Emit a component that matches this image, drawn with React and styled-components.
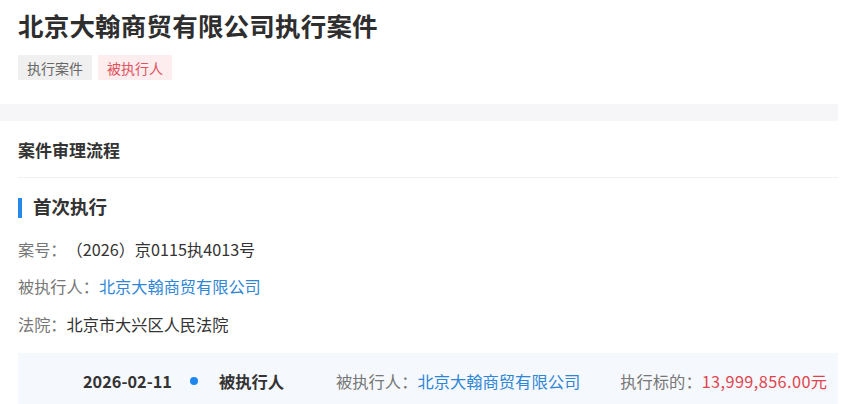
import React from "react";
import styled, { createGlobalStyle } from "styled-components";

const GlobalStyle = createGlobalStyle`
  * { box-sizing: border-box; }
  body {
    margin: 0;
    background: #ffffff;
    font-family: "Noto Sans CJK SC", "Noto Sans", sans-serif;
    color: #333;
  }
`;

const caseInfo = {
  title: "北京大翰商贸有限公司执行案件",
  number: "（2026）京0115执4013号",
  party: "北京大翰商贸有限公司",
  court: "北京市大兴区人民法院",
  date: "2026-02-11",
  role: "被执行人",
  amount: "13,999,856.00元",
};

export default function App() {
  return (
    <>
      <GlobalStyle />
      <Page>
        <Header>
          <Title>{caseInfo.title}</Title>
          <Tags>
            <Tag>执行案件</Tag>
            <Tag tone="red">被执行人</Tag>
          </Tags>
        </Header>
        <Band />
        <Section>
          <SectionTitle>案件审理流程</SectionTitle>
          <StageTitle>首次执行</StageTitle>
          <InfoRow>
            <Label>案号：</Label>
            {caseInfo.number}
          </InfoRow>
          <InfoRow>
            <Label>被执行人：</Label>
            <Link>{caseInfo.party}</Link>
          </InfoRow>
          <InfoRow>
            <Label>法院：</Label>
            {caseInfo.court}
          </InfoRow>
          <Timeline>
            <DateText>{caseInfo.date}</DateText>
            <Dot />
            <Role>{caseInfo.role}</Role>
            <Field>
              <Label>被执行人：</Label>
              <Link>{caseInfo.party}</Link>
            </Field>
            <Field>
              <Label>执行标的：</Label>
              <Amount>{caseInfo.amount}</Amount>
            </Field>
          </Timeline>
        </Section>
      </Page>
    </>
  );
}

const Page = styled.div`
  width: 838px;
`;

const Header = styled.header`
  padding: 8px 18px 24px;
`;

const Title = styled.h1`
  margin: 0;
  font-size: 25.5px;
  line-height: 34px;
  font-weight: 700;
  color: #2e2e2e;
  letter-spacing: 0.2px;
`;

const Tags = styled.div`
  display: flex;
  gap: 6px;
  margin-top: 13px;
`;

const Tag = styled.span`
  display: inline-flex;
  align-items: center;
  height: 25px;
  padding: 0 9px;
  font-size: 14px;
  color: ${(p) => (p.tone === "red" ? "#e0525c" : "#666")};
  background: ${(p) => (p.tone === "red" ? "#fdedef" : "#f0f0f0")};
`;

const Band = styled.div`
  height: 17px;
  background: #f6f5f8;
`;

const Section = styled.section`
  padding-left: 18px;
`;

const SectionTitle = styled.h2`
  margin: 0;
  height: 57px;
  display: flex;
  align-items: center;
  font-size: 17px;
  font-weight: 700;
  color: #333;
  border-bottom: 1px solid #f0eff2;
`;

const StageTitle = styled.h3`
  position: relative;
  margin: 0;
  height: 52px;
  padding: 4px 0 0 15px;
  display: flex;
  align-items: center;
  font-size: 18.5px;
  font-weight: 700;
  color: #333;

  &::before {
    content: "";
    position: absolute;
    left: 0;
    top: 20px;
    width: 4px;
    height: 20px;
    background: #2589ea;
  }
`;

const InfoRow = styled.div`
  height: 37.5px;
  display: flex;
  align-items: center;
  font-size: 16.2px;
  color: #333;
`;

const Label = styled.span`
  color: #777;
`;

const Link = styled.span`
  color: #2f86d6;
`;

const Timeline = styled.div`
  margin-top: 10px;
  height: 56px;
  display: flex;
  align-items: center;
  padding: 0 0 0 65px;
  background: #f5f8fc;
  font-size: 16.3px;
  white-space: nowrap;
`;

const DateText = styled.span`
  flex: none;
  font-weight: 700;
  color: #333;
  width: 107px;
`;

const Dot = styled.span`
  flex: none;
  width: 8px;
  height: 8px;
  border-radius: 50%;
  background: #1e88f0;
  margin-right: 21px;
`;

const Role = styled.span`
  flex: none;
  font-weight: 700;
  color: #333;
  width: 117px;
`;

const Field = styled.span`
  flex: none;
  margin-right: 40px;
`;

const Amount = styled.span`
  color: #e0454f;
  letter-spacing: 0.4px;
`;
